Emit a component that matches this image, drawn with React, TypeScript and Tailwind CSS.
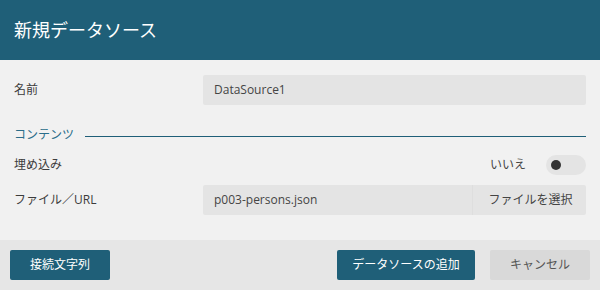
export default function App() {
  return (
    <div
      className="flex h-[290px] w-[600px] flex-col bg-[#f1f1f1] text-[12px] text-[#3c3c3c]"
      style={{ fontFamily: '"Open Sans", "Noto Sans CJK JP", sans-serif' }}
    >
      {/* ヘッダー */}
      <div className="flex h-[60px] items-center bg-[#1f5f78] px-[14px]">
        <h1 className="text-[18px] text-white">新規データソース</h1>
      </div>

      {/* 本文 */}
      <div className="flex flex-1 flex-col px-[14px] pt-[15px]">
        <div className="flex h-[30px] items-center">
          <span className="w-[189px]">名前</span>
          <div className="flex h-[30px] flex-1 items-center rounded-[2px] bg-[#e4e4e4] pl-[11px] text-[#444]">
            DataSource1
          </div>
        </div>

        <div className="mt-[15px] flex h-[30px] items-center">
          <span className="text-[#2a6d8a]">コンテンツ</span>
          <div className="ml-[11px] mt-[3px] h-px flex-1 bg-[#1f5f78]" />
        </div>

        <div className="mt-[5px] flex h-[20px] items-center">
          <span className="flex-1">埋め込み</span>
          <span className="mr-[20px] text-[#444]">いいえ</span>
          <div className="flex h-[20px] w-[40px] items-center rounded-full bg-[#e4e4e4] pl-[5px]">
            <div className="h-[10px] w-[10px] rounded-full bg-[#333]" />
          </div>
        </div>

        <div className="mt-[10px] flex h-[30px] items-center">
          <span className="w-[189px]">ファイル／URL</span>
          <div className="flex h-[30px] flex-1 items-center overflow-hidden rounded-[2px] bg-[#e4e4e4]">
            <span className="flex-1 pl-[11px] text-[#444]">p003-persons.json</span>
            <span className="flex h-full w-[114px] items-center justify-center border-l border-[#dedede] pl-[2px] text-[#444]">
              ファイルを選択
            </span>
          </div>
        </div>
      </div>

      {/* フッター */}
      <div className="flex h-[50px] items-center bg-[#e6e6e6] px-[10px]">
        <button className="flex h-[30px] w-[100px] items-center justify-center rounded-[2px] bg-[#1f5f78] text-white">
          接続文字列
        </button>
        <div className="flex-1" />
        <button className="flex h-[30px] w-[138px] items-center justify-center rounded-[2px] bg-[#1f5f78] text-white">
          データソースの追加
        </button>
        <button className="ml-[15px] flex h-[30px] w-[100px] items-center justify-center rounded-[2px] bg-[#d9d9d9] text-[#555]">
          キャンセル
        </button>
      </div>
    </div>
  );
}
